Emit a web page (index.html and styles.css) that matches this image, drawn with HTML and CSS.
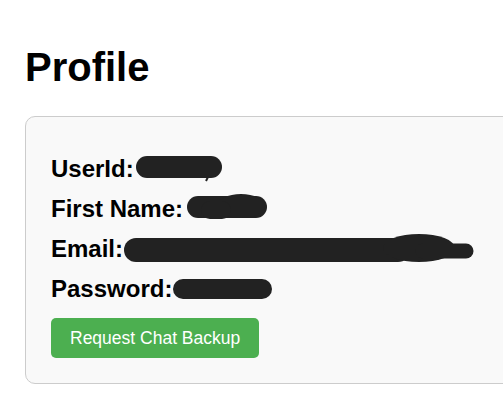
FILE: index.html
```html
<!DOCTYPE html>
<html lang="en">
<head>
<meta charset="utf-8">
<title>Profile</title>
<link rel="stylesheet" href="styles.css">
</head>
<body>
<main class="page">
  <h1 class="title">Profile</h1>
  <section class="card">
    <div class="row"><span class="label">UserId:</span><svg class="redact" width="92" height="32" viewBox="0 0 92 32"><rect x="2" y="5" width="86" height="22" rx="11"/><path d="M74 26 L72 30" stroke="#222" stroke-width="2" fill="none"/></svg></div>
    <div class="row"><span class="label">First Name:</span><svg class="redact" width="88" height="32" viewBox="0 0 88 32"><rect x="4" y="5" width="80" height="22" rx="11"/><ellipse cx="58" cy="15" rx="24" ry="12"/><rect x="18" y="10" width="30" height="18" rx="9"/></svg></div>
    <div class="row"><span class="label">Email:</span><svg class="redact" width="354" height="32" viewBox="0 0 354 32"><path d="M13 19 L275 19" stroke="#222" stroke-width="24" stroke-linecap="round" fill="none"/><ellipse cx="296" cy="17" rx="36" ry="14"/><path d="M300 20 L343 20" stroke="#222" stroke-width="15" stroke-linecap="round" fill="none"/></svg></div>
    <div class="row"><span class="label">Password:</span><svg class="redact" width="102" height="32" viewBox="0 0 102 32"><rect x="1" y="8" width="99" height="20" rx="10"/></svg></div>
    <button class="btn" type="button">Request Chat Backup</button>
  </section>
</main>
</body>
</html>
```

FILE: styles.css
```css
html, body {
  margin: 0;
  padding: 0;
  overflow: hidden;
  background: #ffffff;
}

.page {
  width: 620px;
  padding: 0 0 0 25px;
  font-family: "Liberation Sans", Arial, sans-serif;
  color: #000000;
}

.title {
  font-size: 40px;
  font-weight: bold;
  line-height: 46px;
  margin: 44px 0 26px 0;
}

.card {
  background: #f9f9f9;
  border: 1px solid #cccccc;
  border-radius: 10px;
  padding: 32px 25px 25px 25px;
  display: flex;
  flex-direction: column;
  align-items: flex-start;
}

.row {
  font-size: 24px;
  font-weight: bold;
  line-height: 40px;
  white-space: nowrap;
}

.redact {
  vertical-align: -6px;
  fill: #222222;
}

.btn {
  margin-top: 9px;
  height: 40px;
  padding: 0 19px;
  border: none;
  border-radius: 5px;
  background: #4caf50;
  color: #ffffff;
  font-family: "Liberation Sans", Arial, sans-serif;
  font-size: 17.5px;
  line-height: 40px;
  cursor: pointer;
}
```
